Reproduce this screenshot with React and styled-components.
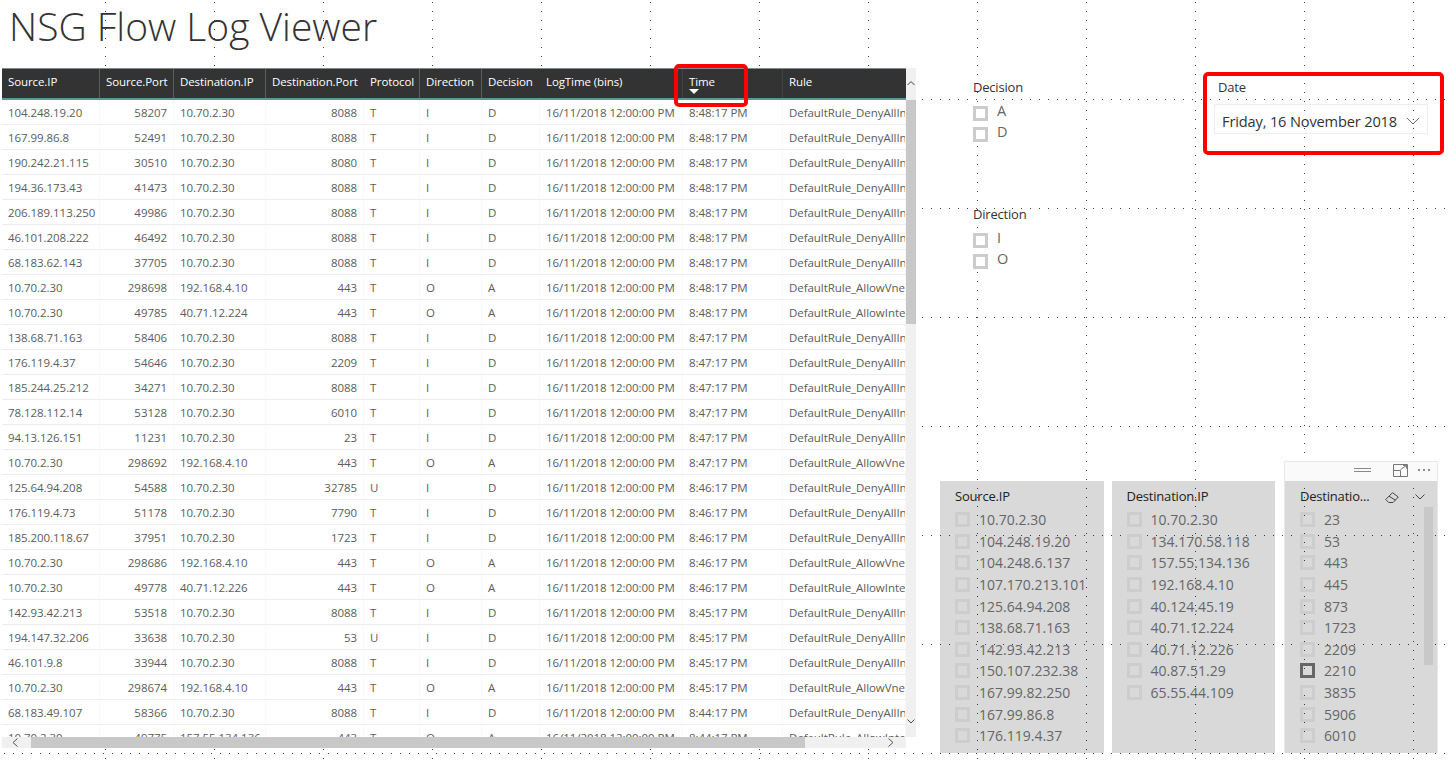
import React from "react";
import styled, { createGlobalStyle } from "styled-components";

const FONT = `"Open Sans", "Noto Sans", "Liberation Sans", sans-serif`;

const Global = createGlobalStyle`
  html, body { margin: 0; padding: 0; background: #fff; }
  body { font-family: ${FONT}; overflow: hidden; }
`;

const Page = styled.div`
  position: relative;
  display: flex;
  align-items: flex-start;
  width: 1449px;
  height: 766px;
  overflow: hidden;
  padding-left: 2px;
  box-sizing: border-box;
`;

const DotGrid = styled.svg`
  position: absolute;
  inset: 0;
  width: 1449px;
  height: 766px;
  pointer-events: none;
`;

const Foreground = styled.div`
  position: relative;
  display: flex;
  align-items: flex-start;
`;

const LeftColumn = styled.div`
  position: relative;
  display: flex;
  flex-direction: column;
  width: 914px;
  flex: none;
`;

const Title = styled.h1`
  margin: 0 0 0 7px;
  height: 68px;
  font-size: 39px;
  line-height: 52px;
  font-weight: 300;
  color: #333;
  white-space: nowrap;
`;

const TableVisual = styled.div`
  position: relative;
  display: grid;
  grid-template-columns: 904px 10px;
  grid-template-rows: 669px 11px;
  background: #fff;
`;

const TableClip = styled.div`
  overflow: hidden;
`;

const COLS = "98px 74px 92px 98px 56px 62px 58px 143px 100px 123px";

const HeadRow = styled.div`
  display: grid;
  grid-template-columns: ${COLS};
  height: 32px;
  background: #333;
  box-sizing: border-box;
  border-top: 1px solid #7f8c8a;
  border-bottom: 2px solid #5f9792;
`;

const lineColors = { strong: "#52605f", faint: "#424242", none: "#333" };

const HeadCell = styled.div`
  position: relative;
  padding: 3px 0 0 6px;
  font-size: 11.5px;
  line-height: 20px;
  color: #fff;
  letter-spacing: -0.1px;
  white-space: nowrap;
  overflow: hidden;
  box-sizing: border-box;
  border-right: 1px solid ${(p) => lineColors[p.$line]};
`;

const SortMark = styled.span`
  position: absolute;
  left: 6px;
  top: 20px;
  width: 0;
  height: 0;
  border-left: 5px solid transparent;
  border-right: 5px solid transparent;
  border-top: 5px solid #fff;
`;

const Row = styled.div`
  display: grid;
  grid-template-columns: ${COLS};
  height: 25px;
  box-sizing: border-box;
  border-bottom: 1px solid #ececec;
`;

const Cell = styled.div`
  padding: ${(p) => (p.$right ? "0 6px 0 0" : "0 0 0 6px")};
  text-align: ${(p) => (p.$right ? "right" : "left")};
  font-size: 11.5px;
  line-height: 26px;
  color: #5c5c5c;
  letter-spacing: -0.05px;
  white-space: nowrap;
  overflow: hidden;
  box-sizing: border-box;
  border-right: 1px solid #f8f8f8;
`;

const VTrack = styled.div`
  position: relative;
  background: #f0f0f0;
  display: flex;
  flex-direction: column;
  justify-content: space-between;
`;

const VThumb = styled.div`
  position: absolute;
  left: 0;
  right: 0;
  top: 32px;
  height: 224px;
  background: #c8c8c8;
`;

const HTrack = styled.div`
  position: relative;
  display: flex;
  justify-content: space-between;
  align-items: center;
  background: #f0f0f0;
  padding: 0 12px 0 10px;
`;

const HThumb = styled.div`
  position: absolute;
  left: 29px;
  width: 774px;
  top: 0;
  bottom: 0;
  background: #c8c8c8;
`;

const Arrow = styled.svg`
  display: block;
  flex: none;
  position: relative;
`;

const VArrowBox = styled.div`
  height: 31px;
  display: flex;
  align-items: center;
  justify-content: center;
`;

const HighlightBox = styled.div`
  position: absolute;
  box-sizing: border-box;
  border: 4px solid #f00;
  border-radius: 5px;
  pointer-events: none;
  left: ${(p) => p.$left}px;
  top: ${(p) => p.$top}px;
  width: ${(p) => p.$width}px;
  height: ${(p) => p.$height}px;
`;

const RightColumn = styled.div`
  position: relative;
  display: flex;
  flex-direction: column;
  margin-left: 24px;
  width: 498px;
  flex: none;
`;

const TopArea = styled.div`
  display: grid;
  grid-template-columns: 230px 1fr;
  height: 461px;
  padding: 78px 0 0 33px;
  box-sizing: border-box;
`;

const SlicerStack = styled.div`
  display: flex;
  flex-direction: column;
  gap: 59px;
`;

const SlicerLabel = styled.div`
  font-size: 13px;
  line-height: 18px;
  color: #333;
  letter-spacing: -0.2px;
  white-space: nowrap;
`;

const SmallSlicer = styled.div`
  display: flex;
  flex-direction: column;
  height: 68px;
`;

const SmallOptions = styled.div`
  display: flex;
  flex-direction: column;
  margin-top: 7px;
`;

const SmallOption = styled.div`
  display: flex;
  align-items: center;
  height: 21px;
  gap: 9px;
  font-size: 14.5px;
  line-height: 18px;
  color: #666;
`;

const OptionText = styled.span`
  margin-top: -5px;
`;

const CheckBox = styled.span`
  display: block;
  flex: none;
  width: 15px;
  height: 15px;
  box-sizing: border-box;
  border: 3px solid ${(p) => (p.$hot ? "#666" : p.$soft ? "#cdcdcd" : "#cccccc")};
  background: ${(p) => (p.$soft ? "transparent" : "#fff")};
`;

const DateSlicer = styled.div`
  display: flex;
  flex-direction: column;
  padding: 0 0 0 11px;
  width: 214px;
`;

const DateLabel = styled(SlicerLabel)`
  padding-left: 4px;
`;

const DateInput = styled.div`
  display: flex;
  align-items: center;
  justify-content: space-between;
  width: 214px;
  height: 30px;
  margin-top: 8px;
  padding: 3px 7px 0 7px;
  box-sizing: border-box;
  border: 1px solid #eee;
  font-size: 14.6px;
  color: #333;
  letter-spacing: -0.15px;
  white-space: nowrap;
`;

const BottomRow = styled.div`
  display: flex;
  align-items: flex-end;
`;

const ListPanel = styled.div`
  width: 164px;
  height: 272px;
  margin-right: 8px;
  padding: 6px 0 0 15px;
  box-sizing: border-box;
  background: rgba(0, 0, 0, 0.15);
  overflow: hidden;
`;

const PanelLabel = styled.div`
  font-size: 13px;
  line-height: 18px;
  height: 22px;
  color: #222;
  letter-spacing: -0.2px;
  white-space: nowrap;
`;

const ListItem = styled.div`
  display: flex;
  align-items: center;
  height: 21.6px;
  gap: 9px;
  font-size: 14px;
  letter-spacing: 0.02px;
  color: #666;
  white-space: nowrap;
`;

const FocusVisual = styled.div`
  position: relative;
  display: flex;
  flex-direction: column;
  margin-left: 1px;
  width: 154px;
  box-sizing: border-box;
  border: 1px solid #e8e8e8;
  border-bottom: 0;
`;

const FocusBar = styled.div`
  display: flex;
  align-items: center;
  justify-content: flex-end;
  height: 19px;
  background: #fafafa;
  padding-right: 3px;
`;

const FocusBody = styled(ListPanel)`
  position: relative;
  width: 152px;
  margin: 0;
  padding-left: 15px;
`;

const LabelRow = styled.div`
  display: flex;
  align-items: flex-start;
`;

const EraserIcon = styled.svg`
  flex: none;
  margin: 5px 0 0 16px;
`;

const PanelChevron = styled.svg`
  flex: none;
  margin: 7px 0 0 16px;
`;

const PanelScroll = styled.div`
  position: absolute;
  left: 139px;
  top: 26px;
  width: 9px;
  height: 158px;
  background: #c8c8c8;
`;

const columns = [
  ["Source.IP", "strong"],
  ["Source.Port", "strong"],
  ["Destination.IP", "strong"],
  ["Destination.Port", "none"],
  ["Protocol", "strong"],
  ["Direction", "strong"],
  ["Decision", "none"],
  ["LogTime (bins)", "faint"],
  ["Time", "faint"],
  ["Rule", "none"],
];

const D = "DefaultRule_DenyAllInBound";
const V = "DefaultRule_AllowVnetOutBound";
const N = "DefaultRule_AllowInternetOutBound";
const H = "10.70.2.30";
const rows = [
  ["104.248.19.20", "58207", H, "8088", "T", "I", "D", "8:48:17 PM", D],
  ["167.99.86.8", "52491", H, "8088", "T", "I", "D", "8:48:17 PM", D],
  ["190.242.21.115", "30510", H, "8080", "T", "I", "D", "8:48:17 PM", D],
  ["194.36.173.43", "41473", H, "8088", "T", "I", "D", "8:48:17 PM", D],
  ["206.189.113.250", "49986", H, "8088", "T", "I", "D", "8:48:17 PM", D],
  ["46.101.208.222", "46492", H, "8088", "T", "I", "D", "8:48:17 PM", D],
  ["68.183.62.143", "37705", H, "8088", "T", "I", "D", "8:48:17 PM", D],
  [H, "298698", "192.168.4.10", "443", "T", "O", "A", "8:48:17 PM", V],
  [H, "49785", "40.71.12.224", "443", "T", "O", "A", "8:48:17 PM", N],
  ["138.68.71.163", "58406", H, "8088", "T", "I", "D", "8:47:17 PM", D],
  ["176.119.4.37", "54646", H, "2209", "T", "I", "D", "8:47:17 PM", D],
  ["185.244.25.212", "34271", H, "8088", "T", "I", "D", "8:47:17 PM", D],
  ["78.128.112.14", "53128", H, "6010", "T", "I", "D", "8:47:17 PM", D],
  ["94.13.126.151", "11231", H, "23", "T", "I", "D", "8:47:17 PM", D],
  [H, "298692", "192.168.4.10", "443", "T", "O", "A", "8:47:17 PM", V],
  ["125.64.94.208", "54588", H, "32785", "U", "I", "D", "8:46:17 PM", D],
  ["176.119.4.73", "51178", H, "7790", "T", "I", "D", "8:46:17 PM", D],
  ["185.200.118.67", "37951", H, "1723", "T", "I", "D", "8:46:17 PM", D],
  [H, "298686", "192.168.4.10", "443", "T", "O", "A", "8:46:17 PM", V],
  [H, "49778", "40.71.12.226", "443", "T", "O", "A", "8:46:17 PM", N],
  ["142.93.42.213", "53518", H, "8088", "T", "I", "D", "8:45:17 PM", D],
  ["194.147.32.206", "33638", H, "53", "U", "I", "D", "8:45:17 PM", D],
  ["46.101.9.8", "33944", H, "8088", "T", "I", "D", "8:45:17 PM", D],
  [H, "298674", "192.168.4.10", "443", "T", "O", "A", "8:45:17 PM", V],
  ["68.183.49.107", "58366", H, "8088", "T", "I", "D", "8:44:17 PM", D],
  [H, "49775", "157.55.134.136", "443", "T", "O", "A", "8:44:17 PM", N],
];

const sourceIps = ["10.70.2.30", "104.248.19.20", "104.248.6.137", "107.170.213.101", "125.64.94.208", "138.68.71.163", "142.93.42.213", "150.107.232.38", "167.99.82.250", "167.99.86.8", "176.119.4.37"];
const destIps = [H, "134.170.58.118", "157.55.134.136", "192.168.4.10", "40.124.45.19", "40.71.12.224", "40.71.12.226", "40.87.51.29", "65.55.44.109"];
const destPorts = ["23", "53", "443", "445", "873", "1723", "2209", "2210", "3835", "5906", "6010"];

const Chevron = ({ dir = "down", size = 14, color = "#555" }) => {
  const d = { down: "M1 1 L7 7 L13 1", up: "M1 7 L7 1 L13 7" }[dir];
  return (
    <Arrow width={size} height={(size * 8) / 14} viewBox="0 0 14 8" fill="none">
      <path d={d} stroke={color} strokeWidth={14 / size} />
    </Arrow>
  );
};

const SideChevron = ({ dir }) => (
  <Arrow width="6" height="9" viewBox="0 0 6 9" fill="none">
    <path d={dir === "left" ? "M5.5 .5 L1 4.5 L5.5 8.5" : "M.5 .5 L5 4.5 L.5 8.5"} stroke="#555" strokeWidth="1" />
  </Arrow>
);

const Dots = () => {
  const xs = [105, 214, 323, 432, 541, 650, 759, 868, 977, 1086, 1195, 1304, 1413];
  const ys = [99, 208, 317, 426, 535, 644, 753];
  const items = [];
  xs.forEach((x) => {
    for (let y = 2; y < 766; y += 9) items.push(<rect key={`v${x}-${y}`} x={x} y={y} width="1" height="1" fill="#444" />);
  });
  ys.forEach((y) => {
    for (let x = 4; x < 1449; x += 9) items.push(<rect key={`h${x}-${y}`} x={x} y={y} width="1" height="1" fill="#444" />);
  });
  return <DotGrid viewBox="0 0 1449 766">{items}</DotGrid>;
};

const Option = ({ children }) => (
  <SmallOption>
    <CheckBox />
    <OptionText>{children}</OptionText>
  </SmallOption>
);

export default function App() {
  return (
    <>
      <Global />
      <Page>
        <Dots />
        <Foreground>
          <LeftColumn>
            <Title>NSG Flow Log Viewer</Title>
            <TableVisual>
              <TableClip>
                <HeadRow>
                  {columns.map(([name, line]) => (
                    <HeadCell key={name} $line={line}>
                      {name}
                      {name === "Time" && <SortMark />}
                    </HeadCell>
                  ))}
                </HeadRow>
                {rows.map((r, i) => (
                  <Row key={i}>
                    <Cell>{r[0]}</Cell>
                    <Cell $right>{r[1]}</Cell>
                    <Cell>{r[2]}</Cell>
                    <Cell $right>{r[3]}</Cell>
                    <Cell>{r[4]}</Cell>
                    <Cell>{r[5]}</Cell>
                    <Cell>{r[6]}</Cell>
                    <Cell>16/11/2018 12:00:00 PM</Cell>
                    <Cell>{r[7]}</Cell>
                    <Cell>{r[8]}</Cell>
                  </Row>
                ))}
              </TableClip>
              <VTrack>
                <VThumb />
                <VArrowBox>
                  <Chevron dir="up" size={8} color="#444" />
                </VArrowBox>
                <VArrowBox>
                  <Chevron dir="down" size={8} color="#444" />
                </VArrowBox>
              </VTrack>
              <HTrack>
                <HThumb />
                <SideChevron dir="left" />
                <SideChevron dir="right" />
              </HTrack>
            </TableVisual>
            <HighlightBox $left={672} $top={64} $width={74} $height={43} />
          </LeftColumn>
          <RightColumn>
            <TopArea>
              <SlicerStack>
                <SmallSlicer>
                  <SlicerLabel>Decision</SlicerLabel>
                  <SmallOptions>
                    <Option>A</Option>
                    <Option>D</Option>
                  </SmallOptions>
                </SmallSlicer>
                <SmallSlicer>
                  <SlicerLabel>Direction</SlicerLabel>
                  <SmallOptions>
                    <Option>I</Option>
                    <Option>O</Option>
                  </SmallOptions>
                </SmallSlicer>
              </SlicerStack>
              <DateSlicer>
                <DateLabel>Date</DateLabel>
                <DateInput>
                  Friday, 16 November 2018
                  <Chevron size={14} color="#666" />
                </DateInput>
              </DateSlicer>
            </TopArea>
            <BottomRow>
              <ListPanel>
                <PanelLabel>Source.IP</PanelLabel>
                {sourceIps.map((v) => (
                  <ListItem key={v}><CheckBox $soft />{v}</ListItem>
                ))}
              </ListPanel>
              <ListPanel>
                <PanelLabel>Destination.IP</PanelLabel>
                {destIps.map((v) => (
                  <ListItem key={v}><CheckBox $soft />{v}</ListItem>
                ))}
              </ListPanel>
              <FocusVisual>
                <FocusBar>
                  <svg width="84" height="19" viewBox="0 0 84 19" fill="none">
                    <path d="M4 6.5H21M4 9.5H21" stroke="#888" />
                    <path d="M43.5 2.5H57.5V14.5H43.5ZM43.5 8.5H50.5V14.5M50.5 7.5L56.5 3.5M53 3.5H56.5V6.5" stroke="#777" />
                    <circle cx="69" cy="8" r="1" fill="#666" />
                    <circle cx="74" cy="8" r="1" fill="#666" />
                    <circle cx="79" cy="8" r="1" fill="#666" />
                  </svg>
                </FocusBar>
                <FocusBody>
                  <LabelRow>
                    <PanelLabel>Destinatio...</PanelLabel>
                    <EraserIcon width="14" height="12" viewBox="0 0 14 12" fill="none">
                      <path d="M.7 7.5 L7.5 .7 L13.3 5 L8 10.5 H3.7 Z M4 4.2 L10.4 8.2" stroke="#444" />
                    </EraserIcon>
                    <PanelChevron width="10" height="6" viewBox="0 0 10 6" fill="none">
                      <path d="M.5 .5L5 5L9.5 .5" stroke="#444" />
                    </PanelChevron>
                  </LabelRow>
                  {destPorts.map((v) => (
                    <ListItem key={v}><CheckBox $soft $hot={v === "2210"} />{v}</ListItem>
                  ))}
                  <PanelScroll />
                </FocusBody>
              </FocusVisual>
            </BottomRow>
            <HighlightBox $left={263} $top={72} $width={241} $height={83} />
          </RightColumn>
        </Foreground>
      </Page>
    </>
  );
}
